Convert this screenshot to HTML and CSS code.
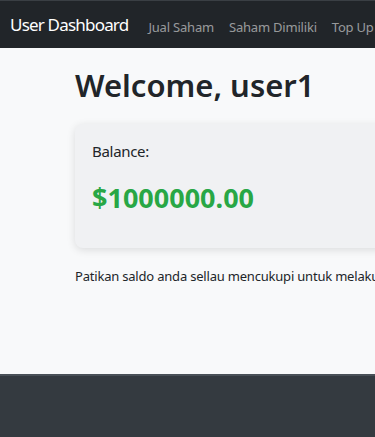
FILE: index.html
```html
<!DOCTYPE html>
<html lang="en">
<head>
    <meta charset="UTF-8">
    <meta name="viewport" content="width=device-width, initial-scale=1.0">
    <title>User Dashboard</title>
    <link rel="stylesheet" href="styles.css">
</head>
<body>
    <!-- Navbar -->
    <nav class="navbar">
        <a class="brand" href="#">User Dashboard</a>
        <ul class="nav-links">
            <li><a href="#">Jual Saham</a></li>
            <li><a href="#">Saham Dimiliki</a></li>
            <li><a href="#">Top Up</a></li>
            <li><a href="#">Logout</a></li>
        </ul>
    </nav>

    <!-- Main Content -->
    <main class="container">
        <h1>Welcome, user1</h1>
        <div class="card">
            <p class="card-label">Balance:</p>
            <h2 class="balance">$1000000.00</h2>
        </div>
        <p class="note">Patikan saldo anda sellau mencukupi untuk melakukan transaksi pembelian saham.</p>
    </main>

    <footer class="footer"></footer>
</body>
</html>
```

FILE: styles.css
```css
* {
    margin: 0;
    padding: 0;
    box-sizing: border-box;
}

html, body {
    overflow-x: hidden;
}

body {
    font-family: 'Noto Sans', 'Open Sans', sans-serif;
    background: #f8f9fa;
    color: #212529;
    min-height: 100vh;
    display: flex;
    flex-direction: column;
}

.navbar {
    background: #212529;
    border-top: 1px solid #3a3f44;
    height: 48px;
    display: flex;
    align-items: center;
    padding: 0 10px;
    white-space: nowrap;
}

.brand {
    color: #fff;
    font-size: 17px;
    letter-spacing: -0.8px;
    text-decoration: none;
    margin-right: 20px;
}

.nav-links {
    display: flex;
    list-style: none;
    gap: 15px;
    margin-top: 2px;
}

.nav-links a {
    color: rgba(255, 255, 255, 0.55);
    font-size: 13px;
    letter-spacing: -0.2px;
    text-decoration: none;
}

.container {
    flex: 1;
    padding: 19px 0 40px 75px;
    width: 1000px;
}

h1 {
    font-size: 31px;
    font-weight: 600;
    line-height: 1.2;
    margin-bottom: 20px;
}

.card {
    background: #f0f1f3;
    border-radius: 8px;
    box-shadow: 0 2px 8px rgba(0, 0, 0, 0.12);
    padding: 16px 17px 34px;
    margin-bottom: 19px;
}

.card-label {
    font-size: 15px;
    letter-spacing: -0.3px;
    line-height: 1.5;
    margin-bottom: 19px;
}

.balance {
    color: #28a745;
    font-size: 27px;
    font-weight: 700;
    line-height: 1.2;
}

.note {
    font-size: 13px;
    letter-spacing: -0.2px;
    line-height: 1.5;
}

.footer {
    background: #343a40;
    border-top: 2px solid #495057;
    height: 63px;
}
```
